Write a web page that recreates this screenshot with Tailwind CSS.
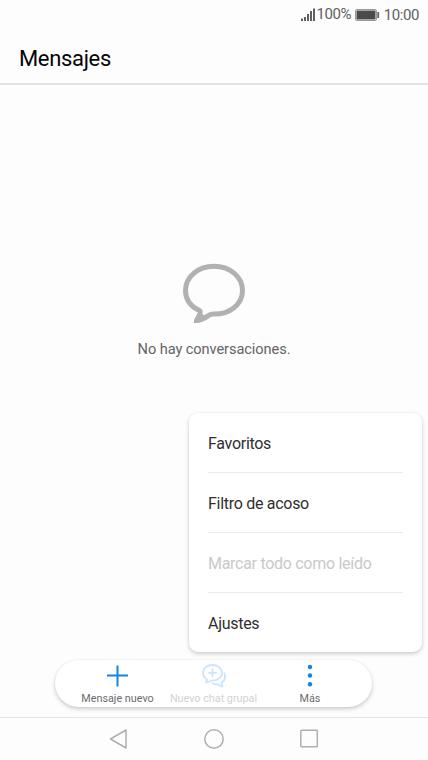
<!DOCTYPE html>
<html lang="es">
<head>
<meta charset="utf-8">
<title>Mensajes</title>
<script src="https://cdn.jsdelivr.net/npm/@tailwindcss/browser@4"></script>
</head>
<body class="bg-[#fdfdfd]">
<div class="relative flex h-[760px] w-[428px] flex-col overflow-hidden bg-[#fdfdfd] font-['Roboto',sans-serif] whitespace-nowrap">
  <div class="flex h-[29px] shrink-0 items-center justify-end pr-[9px] text-[15px] leading-[29px] tracking-[-0.400px] text-[#606060]">
    <svg class="mr-[1px] h-[14px] w-[14px]" viewBox="0 0 14 14" fill="#606060">
      <rect x="0" y="10.500" width="2" height="2.5"/><rect x="3" y="9" width="2" height="4"/><rect x="6" y="6" width="2" height="7"/><rect x="9" y="3" width="2" height="10"/><rect x="12" y=".5" width="2" height="12.5"/>
    </svg>
    <span>100%</span>
    <svg class="mr-[4px] ml-[4px] h-[12px] w-[24.500px]" viewBox="0 0 24.500 12" fill="none">
      <rect x=".5" y=".5" width="21" height="11" rx="1.5" stroke="#999"/><rect x="1.500" y="1.500" width="19" height="9" fill="#4b4b4b"/><rect x="22.300" y="3" width="1.800" height="6" fill="#666"/>
    </svg>
    <span class="pt-px">10:00</span>
  </div>
  <header class="flex h-[56px] shrink-0 items-center border-b-2 border-[#e3e3e3] pl-[19px]">
    <h1 class="pt-[6px] text-[22px] leading-[26px] tracking-[-0.340px] text-[#050505]">Mensajes</h1>
  </header>
  <main class="flex flex-1 flex-col items-center pt-[177px]">
    <svg class="h-[64px] w-[66px]" viewBox="0 0 66 64" fill="none" stroke="#b1b1b1" stroke-width="5" stroke-linejoin="round">
      <path d="M33 4.300C17.500 4.300 4.500 14.500 4.500 28.500C4.500 37.500 10 44.500 18 48.300C19.500 49 19.500 50.200 19 52L15.500 58.600C20.500 58 24.500 55.800 28 53.200C29.500 52.200 30.500 52.100 32.500 52.100C48.500 52.500 61.500 42.500 61.500 28.500C61.500 14.500 48.500 4.300 33 4.300Z"/>
      <path d="M13.400 60.200L18.500 51.500L23.500 54.500L18 59.800Z" fill="#b1b1b1" stroke-width="1.500"/>
    </svg>
    <p class="mt-[13px] text-[14.600px] leading-[20px] tracking-[-0.080px] text-[#646464]">No hay conversaciones.</p>
  </main>
  <footer class="flex h-[43px] shrink-0 items-center justify-center gap-[75px] border-t border-[#e6e6e6] pr-[1px]">
    <svg class="h-[22px] w-[20px]" viewBox="0 0 20 22" fill="none" stroke="#afafaf" stroke-width="1.500" stroke-linejoin="round"><path d="M2.500 11L18 2V20Z"/></svg>
    <svg class="h-[22px] w-[22px]" viewBox="0 0 22 22" fill="none" stroke="#afafaf" stroke-width="1.500"><circle cx="11" cy="11" r="9.200"/></svg>
    <svg class="h-[22px] w-[20px]" viewBox="0 0 20 22" fill="none" stroke="#afafaf" stroke-width="1.500"><rect x=".800" y="2.300" width="16.500" height="16.500" rx=".7"/></svg>
  </footer>

  <nav class="absolute top-[660px] left-[55px] flex h-[47px] w-[317px] justify-center rounded-full bg-white text-[10.800px] leading-[13px] text-[#6c6c6c] shadow-[0_2px_4px_rgba(0,0,0,0.2),0_0_2px_rgba(0,0,0,0.06)]">
    <button class="flex w-[96px] flex-col items-center">
      <svg class="mt-[4px] h-[24px] w-[24px]" viewBox="0 0 24 24" stroke="#1384e5" stroke-width="2"><path d="M11.500 1.500V22.500M1 11.500H22"/></svg>
      <span class="mt-[4px]">Mensaje nuevo</span>
    </button>
    <button class="flex w-[96px] flex-col items-center text-[#d2d2d2]">
      <svg class="mt-[3px] h-[25px] w-[26px]" viewBox="0 0 26 25" fill="none" stroke="#cde4fa" stroke-width="1.800" stroke-linejoin="round" stroke-linecap="round">
        <path d="M11.500 2C6 2 2 5.300 2 9.800C2 12.800 3.700 15.100 6.200 16.500L5 19.300C7 19.300 8.500 18.600 9.800 17.600C16.500 18 21 14.400 21 9.800C21 5.300 17 2 11.500 2Z"/>
        <path d="M11.500 6.300V13.300M8 9.800H15"/>
        <path d="M23.300 10.300C25.300 14 24 17.700 20.500 19.500L21.500 23.500C19.500 23.500 18 22.300 16.800 21.300C14.500 21.500 12.800 21 11.200 20.200"/>
      </svg>
      <span class="mt-[4px]">Nuevo chat grupal</span>
    </button>
    <button class="flex w-[96px] flex-col items-center">
      <svg class="mt-[3px] h-[25px] w-[24px]" viewBox="0 0 24 25" fill="#1384e5"><circle cx="12" cy="4" r="2.200"/><circle cx="12" cy="12.500" r="2.200"/><circle cx="12" cy="21.200" r="2.200"/></svg>
      <span class="mt-[4px] pl-px">Más</span>
    </button>
  </nav>

  <ul class="absolute top-[413px] left-[189px] h-[239px] w-[233px] rounded-[9px] bg-white px-[19px] text-[16px] leading-[59px] tracking-[-0.290px] text-[#2f2f2f] shadow-[0_2px_4px_rgba(0,0,0,0.18),0_0_3px_rgba(0,0,0,0.05)]">
    <li class="h-[60px] border-b border-[#ebebeb] pt-px">Favoritos</li>
    <li class="h-[60px] border-b border-[#ebebeb] pt-px">Filtro de acoso</li>
    <li class="h-[60px] border-b border-[#ebebeb] pt-px text-[#c9c9c9]">Marcar todo como leído</li>
    <li class="h-[59px] pt-px">Ajustes</li>
  </ul>
</div>
</body>
</html>
